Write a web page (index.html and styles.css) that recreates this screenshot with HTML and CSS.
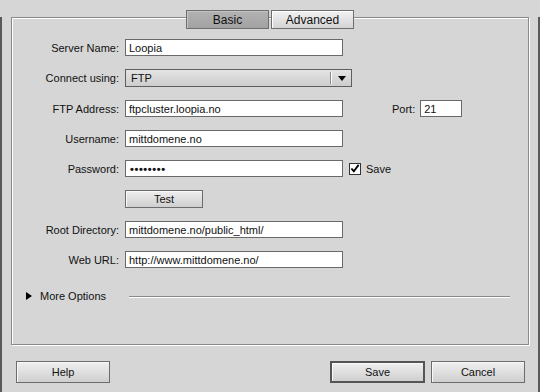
FILE: index.html
```html
<!DOCTYPE html>
<html lang="en">
<head>
    <meta charset="UTF-8">
    <title>Site Setup - Server</title>
    <link rel="stylesheet" href="styles.css">
</head>
<body>
    <div class="window">
        <div class="panel">
            <div class="tabs">
                <button class="tab active">Basic</button>
                <button class="tab">Advanced</button>
            </div>

            <div class="form">
                <label class="label" for="server-name">Server Name:</label>
                <input class="field" type="text" id="server-name" value="Loopia">
                <span></span>

                <label class="label">Connect using:</label>
                <div class="select">
                    <span class="select-value">FTP</span>
                    <span class="select-sep"></span>
                    <span class="select-arrow"></span>
                </div>

                <label class="label" for="ftp-address">FTP Address:</label>
                <input class="field" type="text" id="ftp-address" value="ftpcluster.loopia.no">
                <div class="extra port">
                    <label class="label" for="port">Port:</label>
                    <input class="field port-field" type="text" id="port" value="21">
                </div>

                <label class="label" for="username">Username:</label>
                <input class="field" type="text" id="username" value="mittdomene.no">
                <span></span>

                <label class="label" for="password">Password:</label>
                <div class="field password">••••••••</div>
                <div class="extra save">
                    <span class="checkbox">
                        <svg width="11" height="11" viewBox="0 0 11 11"><path d="M1.5 5.5 L4.2 8.5 L9.5 1.5" fill="none" stroke="#000" stroke-width="2"/></svg>
                    </span>
                    <span>Save</span>
                </div>

                <span></span>
                <button class="btn test">Test</button>
                <span></span>

                <label class="label" for="root-dir">Root Directory:</label>
                <input class="field" type="text" id="root-dir" value="mittdomene.no/public_html/">
                <span></span>

                <label class="label" for="web-url">Web URL:</label>
                <input class="field" type="text" id="web-url" value="http://www.mittdomene.no/">
                <span></span>
            </div>

            <div class="more">
                <span class="triangle"></span>
                <span class="more-text">More Options</span>
                <span class="more-line"></span>
            </div>
        </div>

        <div class="actions">
            <button class="btn">Help</button>
            <div class="actions-right">
                <button class="btn default">Save</button>
                <button class="btn">Cancel</button>
            </div>
        </div>
    </div>
</body>
</html>
```

FILE: styles.css
```css
body {
    margin: 0;
    padding: 0;
    background-color: #d6d6d6;
    font-family: 'Liberation Sans', Arial, sans-serif;
    font-size: 11px;
    color: #111;
}

.window {
    width: 540px;
    height: 392px;
    box-sizing: border-box;
    border-left: 2px solid #595959;
    border-right: 2px solid #595959;
    border-bottom: 2px solid #595959;
    background-color: #d6d6d6;
}

.panel {
    margin: 17px 9px 0 9px;
    height: 328px;
    box-sizing: border-box;
    border: 1px solid #8a8a8a;
    box-shadow: 1px 1px 0 #fff, inset 1px 1px 0 #fff;
}

.tabs {
    display: flex;
    justify-content: center;
    gap: 2px;
    margin-top: -8px;
}

.tab {
    width: 83px;
    height: 19px;
    padding: 0;
    border: 1px solid #6e6e6e;
    font-family: inherit;
    font-size: 12px;
    color: #111;
    background: linear-gradient(#f2f2f2, #d4d4d4);
    box-shadow: inset 1px 1px 0 #fff;
}

.tab.active {
    background: linear-gradient(#b2b2b2, #a2a2a2);
    box-shadow: inset 1px 1px 0 #c4c4c4;
}

.form {
    display: grid;
    grid-template-columns: 107px 218px 1fr;
    column-gap: 6px;
    row-gap: 13px;
    align-items: center;
    margin-top: 10px;
}

.label {
    text-align: right;
    white-space: nowrap;
}

.field {
    height: 17px;
    box-sizing: border-box;
    border: 1px solid #6a6a6a;
    background-color: #fff;
    padding: 0 3px;
    margin: 0;
    font-family: inherit;
    font-size: 11px;
    color: #111;
    outline: none;
}

.password {
    display: flex;
    align-items: center;
    font-weight: bold;
    font-size: 11px;
    letter-spacing: 0.6px;
    padding-left: 4px;
}

.select {
    grid-column: 2 / 4;
    width: 227px;
    height: 18px;
    box-sizing: border-box;
    border: 1px solid #5e5e5e;
    background: linear-gradient(#e4e4e4, #cdcdcd);
    display: flex;
    align-items: center;
}

.select-value {
    flex: 1;
    padding-left: 5px;
}

.select-sep {
    width: 1px;
    height: 12px;
    background-color: #8a8a8a;
    box-shadow: 1px 0 0 #fff;
}

.select-arrow {
    width: 0;
    height: 0;
    margin: 0 5px 0 7px;
    border-left: 4px solid transparent;
    border-right: 4px solid transparent;
    border-top: 5px solid #000;
}

.extra {
    display: flex;
    align-items: center;
}

.port {
    margin-left: 43px;
    gap: 5px;
}

.port-field {
    width: 42px;
}

.save {
    gap: 5px;
}

.checkbox {
    width: 12px;
    height: 12px;
    box-sizing: border-box;
    border: 1px solid #333;
    background-color: #fff;
    display: flex;
    align-items: center;
    justify-content: center;
}

.btn {
    height: 22px;
    width: 94px;
    padding: 0;
    border: 1px solid #6c6c6c;
    background: linear-gradient(#efefef, #cfcfcf);
    box-shadow: inset 1px 1px 0 #f8f8f8;
    font-family: inherit;
    font-size: 11px;
    color: #111;
}

.btn.test {
    width: 78px;
    height: 18px;
}

.btn.default {
    border: 2px solid #555;
    width: 95px;
}

.more {
    display: flex;
    align-items: center;
    margin-top: 22px;
    padding-left: 14px;
}

.triangle {
    width: 0;
    height: 0;
    border-top: 4px solid transparent;
    border-bottom: 4px solid transparent;
    border-left: 6px solid #000;
}

.more-text {
    margin-left: 8px;
    font-size: 11px;
}

.more-line {
    margin-left: 23px;
    width: 381px;
    height: 1px;
    background-color: #8a8a8a;
    box-shadow: 0 1px 0 #fff;
}

.actions {
    display: flex;
    justify-content: space-between;
    margin-top: 16px;
    padding: 0 13px 0 14px;
}

.actions-right {
    display: flex;
    gap: 6px;
}
```
